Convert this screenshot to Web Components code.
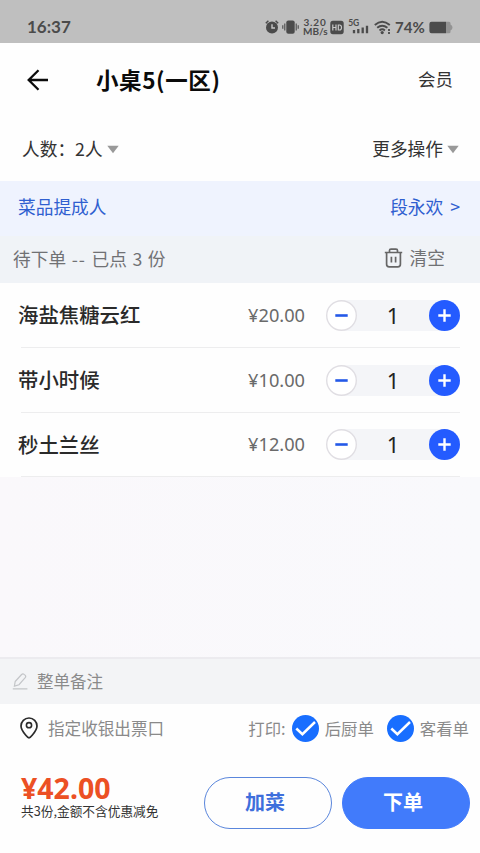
<!DOCTYPE html>
<html lang="zh-CN">
<head>
<meta charset="utf-8">
<title>小桌5(一区)</title>
<style>
html,body{margin:0;padding:0}
body{width:480px;height:853px;overflow:hidden;background:#fefefe;font-family:"Noto Sans CJK SC","Noto Sans",sans-serif;color:#333}
</style>
</head>
<body>
<order-page></order-page>
<script>
function define(name, css, html, after) {
  const tpl = document.createElement('template');
  tpl.innerHTML = '<style>*{box-sizing:border-box}svg{display:block;flex:none}:host{box-sizing:border-box;white-space:nowrap}' + css + '</style>' + html;
  customElements.define(name, class extends HTMLElement {
    connectedCallback() {
      if (this.shadowRoot) return;
      this.attachShadow({ mode: 'open' }).appendChild(tpl.content.cloneNode(true));
      if (after) after(this, this.shadowRoot);
    }
  });
}

define('status-bar', `
:host{display:flex;align-items:center;height:43px;padding:11px 26px 0 27px;background:#bfbfbf;color:#4b4b4b;font-family:"Noto Sans",sans-serif;font-weight:600}
.time{font:700 17px/20px Lato,"Noto Sans",sans-serif;letter-spacing:0;flex:1}
.speed{font:700 10px/8.5px Lato,sans-serif;width:24px;text-align:center;margin-left:4px;margin-top:-1px}
.speed div:first-child{letter-spacing:.8px}
.pct{font:700 15px/20px Lato,sans-serif;margin-left:4px;width:31px}
`, `
<span class="time">16:37</span>
<svg width="14" height="16" viewBox="0 0 14 16"><circle cx="7" cy="8.5" r="6" fill="#4b4b4b"/><path d="M.8 4.2 3.4 1.8M13.2 4.2 10.6 1.8" stroke="#4b4b4b" stroke-width="1.5"/><path d="M7 5.3V9h3" fill="none" stroke="#c8c8c8" stroke-width="1.4"/></svg>
<svg style="margin-left:3px" width="17" height="16" viewBox="0 0 17 16"><rect x="4.3" y="1.5" width="8.4" height="13.2" rx="2" fill="#4b4b4b"/><path d="M2.8 4.5v7M.8 6.3v3.4M14.2 4.5v7M16.2 6.3v3.4" stroke="#4b4b4b" stroke-width="1.1"/></svg>
<div class="speed"><div>3.20</div><div>MB/s</div></div>
<svg style="margin-left:3px" width="14" height="15" viewBox="0 0 14 15"><rect x=".3" y=".8" width="13.4" height="13.4" rx="2.6" fill="#4b4b4b"/><path d="M2.8 4.4v6.2M6 4.4v6.2M2.8 7.5H6M8.3 5h1.2q2 0 2 2.5t-2 2.5H8.3z" fill="none" stroke="#c8c8c8" stroke-width="1.2"/></svg>
<svg style="margin-left:4px" width="22" height="18" viewBox="0 0 22 18"><text x="0.2" y="8" font-family="Lato" font-weight="700" font-size="8.5" fill="#4b4b4b">5G</text><path d="M6 12v3.2M10.3 11v4.2M14.7 9.5v5.7M19 7.7v7.5" stroke="#4b4b4b" stroke-width="2.3"/></svg>
<svg style="margin-left:4px" width="17" height="15" viewBox="0 0 17 15"><g fill="none" stroke="#4b4b4b" stroke-width="1.9"><path d="M.8 5q7.3-6.5 15 0M3.2 7.8q5-4.3 10.2 0M5.5 10.4q2.8-2.2 5.4 0"/></g><circle cx="8.2" cy="12.6" r="1.6" fill="#4b4b4b"/><path d="M15 9v1.9M15 12v2" stroke="#4b4b4b" stroke-width="1.8"/></svg>
<span class="pct">74%</span>
<svg style="margin-left:3px;margin-right:1px" width="24" height="13" viewBox="0 0 24 13"><path d="M17 .7h3q1.5 0 1.5 1.5v1.3q2 .8 2 3t-2 3v1.2q0 1.5-1.5 1.5h-3z" fill="#939393"/><path d="M2.5.7H17v11.5H2.5Q.4 12.2.4 10V3Q.4.7 2.5.7z" fill="#4b4b4b"/></svg>
`);

define('title-bar', `
:host{display:flex;align-items:center;height:74px;padding:0 27px;color:#0b0b0b}
h1{margin:-2px 0 0 47px;font-size:22.5px;line-height:30px;font-weight:700;letter-spacing:.6px;flex:1}
a{font-size:17.5px;line-height:24px;color:#333;margin-top:-2px}
`, `
<svg width="22" height="22" viewBox="0 0 22 22" fill="none" stroke="#0b0b0b" stroke-width="2.3"><path d="M11.5 1.3 1.7 11l9.8 9.7M2 11h19"/></svg>
<h1><slot name="title"></slot></h1><a><slot name="action"></slot></a>`);

define('drop-label', `
:host{display:inline-flex;align-items:center;gap:4px;font-size:17.7px;line-height:26px;color:#333}
span{margin-top:-2px}
`, `<span><slot></slot></span><svg width="12" height="9" viewBox="0 0 12 9"><path d="M.3.7h11.4L6 8.2z" fill="#999"/></svg>`);

define('split-bar', `
:host{display:flex;justify-content:space-between;align-items:center}
`, `<slot></slot>`);

define('clear-button', `
:host{display:inline-flex;align-items:center;gap:7px}
span{margin-top:-1px}
`, `<svg width="19" height="20" viewBox="0 0 19 20" fill="none" stroke="#666" stroke-width="1.7"><path d="M.8 4.5h17.4M5.500 4.300V2.600q0-1.500 1.500-1.500h5q1.500 0 1.500 1.500v1.700M2.600 4.600v11.600q0 2.600 2.600 2.600h8.600q2.600 0 2.600-2.600V4.600M7.400 8.800v5.600M11.600 8.800v5.600"/></svg><span><slot></slot></span>`);

define('qty-stepper', `
:host{display:flex;justify-content:space-between;align-items:center;width:134px;height:31px;background:linear-gradient(90deg,transparent 15px,#f4f5f8 15px,#f4f5f8 119px,transparent 119px);color:#222;font-family:"Noto Sans",sans-serif;font-size:22px;line-height:31px}
`, `
<svg width="31" height="31" viewBox="0 0 31 31"><circle cx="15.5" cy="15.5" r="14.8" fill="#fff" stroke="#e0dee3" stroke-width="1.4"/><path d="M9.3 15.5h12.4" stroke="#2459e8" stroke-width="2.6"/></svg>
<span><slot></slot></span>
<svg width="31" height="31" viewBox="0 0 31 31"><circle cx="15.5" cy="15.5" r="15.5" fill="#245bff"/><path d="M9.3 15.5h12.4M15.5 9.3v12.4" stroke="#fff" stroke-width="2.4"/></svg>`);

define('dish-row', `
:host{display:flex;align-items:center;height:65px;margin:0 20px 0 21px;border-bottom:1px solid #ededee}
.name{font-size:20.4px;line-height:30px;font-weight:500;color:#2a2a2a;margin:-2px 0 0 -3px;flex:1}
.price{font-family:"Noto Sans",sans-serif;font-size:18.2px;line-height:28px;color:#6a6a6a;margin:-1px 21px 0 0}
`, `<span class="name"></span><span class="price"></span><qty-stepper></qty-stepper>`, (el, r) => {
  r.querySelector('.name').textContent = el.getAttribute('name');
  r.querySelector('.price').textContent = el.getAttribute('price');
  r.querySelector('qty-stepper').textContent = el.getAttribute('qty');
});

define('note-bar', `
:host{display:flex;align-items:center;height:47px;padding:0 12px 0;gap:9px;background:#f3f4f6;border-top:2px solid #ecebef;color:#8a8a8a;font-size:16.5px}
span{margin-top:-1px}
`, `<svg width="16" height="17" viewBox="0 0 16 17" fill="none" stroke="#c3c5c8" stroke-width="1.2"><path d="M3.200 8.500 9.600 1.500q1.200-1.200 2.500-.1l.9.7q1.300 1.200.2 2.600L7 11.700l-4.600 1.400zM.8 15.800h14.600"/></svg><span><slot></slot></span>`);

define('check-option', `
:host{display:inline-flex;align-items:center;gap:6px}
span{margin-top:-1px}
`, `<svg width="27" height="27" viewBox="0 0 27 27"><circle cx="13.5" cy="13.5" r="13.5" fill="#186eff"/><path d="M4.3 13.5 10.4 19.2 23 7" fill="none" stroke="#fff" stroke-width="2.5"/></svg><span><slot></slot></span>`);

define('print-bar', `
:host{display:flex;align-items:center;height:49px;padding:0 11px 1px 20px;color:#8a8a8a;font-size:16.4px;line-height:24px}
.place{flex:1;margin-left:10px;font-size:16.6px}
check-option{margin-left:6px}
check-option+check-option{margin-left:13px}
`, `<svg width="18" height="22" viewBox="0 0 18 22" fill="none" stroke="#2b2b2b"><path d="M9 20.8Q7.8 20.8 5.6 18 1 12.5 1 9A8 8 0 0 1 17 9Q17 12.5 12.4 18 10.2 20.8 9 20.8z" stroke-width="1.7"/><circle cx="9" cy="8.2" r="2.6" stroke-width="1.6"/></svg>
<span class="place">指定收银出票口</span><span>打印:</span><check-option>后厨单</check-option><check-option>客看单</check-option>`);

define('pill-button', `
:host{display:flex;align-items:center;justify-content:center;width:128px;height:52px;border-radius:26px;border:1.5px solid #5a86dc;color:#3e6fdc;font-size:20px;font-weight:700;line-height:28px;padding:0 6px 2px 0}
:host([solid]){background:#417bfb;border-color:#417bfb;color:#fff}
`, `<slot></slot>`);

define('checkout-bar', `
:host{display:flex;align-items:center;height:100px;padding:0 10px 1px 21px;gap:10px}
.sum{flex:1}
.total{font:700 28.5px/30px "Noto Sans",sans-serif;color:#ec5024;margin-top:-14px}
.note{font-size:12.7px;line-height:16px;color:#333}
`, `<div class="sum"><div class="total">¥42.00</div><div class="note">共3份,金额不含优惠减免</div></div><pill-button>加菜</pill-button><pill-button solid>下单</pill-button>`);

define('order-page', `
:host{display:flex;flex-direction:column;width:480px;height:853px;background:#fefefe}
.tools{height:64px;padding:0 21px 0 22px}
.staff{height:55px;padding:0 20px 5px 18px;background:#eff3fe;color:#2f5fd0;font-size:17.7px}
.staff .who{word-spacing:3px}
.pending{height:47px;padding:0 35px 4px 13px;background:#f0f3f7;color:#707174;font-size:17.7px}
.pending .state{word-spacing:1.6px}
.dash{letter-spacing:1px}
.blank{flex:1;background:linear-gradient(90deg,#faf8fb,#f9f9fc)}
`, `
<status-bar></status-bar>
<title-bar><span slot="title">小桌5(一区)</span><span slot="action">会员</span></title-bar>
<split-bar class="tools"><drop-label>人数：2人</drop-label><drop-label>更多操作</drop-label></split-bar>
<split-bar class="staff"><span>菜品提成人</span><span class="who">段永欢 &gt;</span></split-bar>
<split-bar class="pending"><span class="state">待下单 <span class="dash">--</span> 已点 3 份</span><clear-button>清空</clear-button></split-bar>
<dish-row name="海盐焦糖云红" price="¥20.00" qty="1"></dish-row>
<dish-row name="带小时候" price="¥10.00" qty="1"></dish-row>
<dish-row name="秒土兰丝" price="¥12.00" qty="1" style="height:64px"></dish-row>
<div class="blank"></div>
<note-bar>整单备注</note-bar>
<print-bar></print-bar>
<checkout-bar></checkout-bar>`);
</script>
</body>
</html>
